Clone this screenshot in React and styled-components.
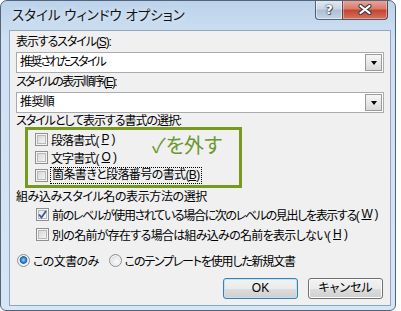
import React from "react";
import styled, { createGlobalStyle } from "styled-components";

const GlobalStyle = createGlobalStyle`
  body {
    margin: 0;
    background: #ffffff;
    font-family: "Liberation Sans", "Noto Sans CJK JP", sans-serif;
    font-feature-settings: "palt";
  }
`;

export default function App() {
  return (
    <>
      <GlobalStyle />
      <Window>
        <TitleBar>
          <Title>スタイル ウィンドウ オプション</Title>
          <Captions>
            <HelpButton>?</HelpButton>
            <CloseButton>
              <svg width="14" height="11" viewBox="0 0 14 11">
                <path d="M2.5 2 L11.5 9 M11.5 2 L2.5 9" stroke="#3b3f4a" strokeWidth="4.2" strokeLinecap="round" />
                <path d="M2.5 2 L11.5 9 M11.5 2 L2.5 9" stroke="#fff" strokeWidth="2.2" strokeLinecap="round" />
              </svg>
            </CloseButton>
          </Captions>
        </TitleBar>
        <Client>
          <Label $ls={-1.1}>
            表示するスタイル(<u>S</u>):
          </Label>
          <Combo $ls={-1.8}>
            <span>推奨されたスタイル</span>
            <DropButton />
          </Combo>
          <Label $ls={-1.7}>
            スタイルの表示順序(<u>E</u>):
          </Label>
          <Combo>
            <span>推奨順</span>
            <DropButton />
          </Combo>
          <Label $small $ls={-1.05}>
            スタイルとして表示する書式の選択:
          </Label>
          <NoteBox>
            <CheckRow $h={18} $ls={-0.9}>
              <Check />
              段落書式(<u>P</u>)
            </CheckRow>
            <Note>✓を外す</Note>
            <CheckRow $h={18} $ls={-0.9}>
              <Check />
              文字書式(<u>O</u>)
            </CheckRow>
            <CheckRow $h={18} $wide>
              <Check />
              <Focus>
                箇条書きと段落番号の書式(<u>B</u>)
              </Focus>
            </CheckRow>
          </NoteBox>
          <Label $small $gap $ls={-0.4}>
            組み込みスタイル名の表示方法の選択
          </Label>
          <CheckRow $h={20} $indent $ls={-1.35}>
            <Check $checked>
              <svg width="9" height="9" viewBox="0 0 9 9">
                <path d="M1 4.5 L3.5 7.5 L8 1" fill="none" stroke="#3d5a98" strokeWidth="1.8" />
              </svg>
            </Check>
            前のレベルが使用されている場合に次のレベルの見出しを表示する(<u>W</u>)
          </CheckRow>
          <CheckRow $h={20} $indent $ls={-0.7}>
            <Check />
            別の名前が存在する場合は組み込みの名前を表示しない(<u>H</u>)
          </CheckRow>
          <RadioRow>
            <RadioOption>
              <Radio $on />
              この文書のみ
            </RadioOption>
            <RadioOption $ls={-1.2}>
              <Radio />
              このテンプレートを使用した新規文書
            </RadioOption>
          </RadioRow>
          <ButtonRow>
            <Button $default>OK</Button>
            <Button>キャンセル</Button>
          </ButtonRow>
        </Client>
      </Window>
    </>
  );
}

const spacing = (p) => (p.$ls !== undefined ? `${p.$ls}px` : "inherit");

const Window = styled.div`
  width: 396px;
  height: 311px;
  box-sizing: border-box;
  border: 1px solid #56647a;
  border-radius: 7px 7px 6px 6px;
  background: linear-gradient(180deg, #bcd3eb 0%, #cfe0f2 40px, #d7e6f5 100%);
  display: flex;
  flex-direction: column;
  overflow: hidden;
`;

const TitleBar = styled.div`
  height: 29px;
  display: flex;
  justify-content: space-between;
  align-items: flex-start;
`;

const Title = styled.div`
  margin: 6px 0 0 11px;
  font-size: 13.5px;
  line-height: 18px;
  color: #111;
  text-shadow: 0 0 6px rgba(255, 255, 255, 0.9);
`;

const Captions = styled.div`
  display: flex;
  margin: -1px 7px 0 0;
`;

const CaptionBase = styled.div`
  height: 20px;
  box-sizing: border-box;
  border: 1px solid rgba(45, 55, 75, 0.75);
  border-top: none;
  display: flex;
  align-items: center;
  justify-content: center;
`;

const HelpButton = styled(CaptionBase)`
  width: 27px;
  border-right: none;
  border-radius: 0 0 0 4px;
  font-family: "DejaVu Sans", sans-serif;
  font-weight: bold;
  font-size: 13px;
  color: #fff;
  text-shadow: 0 0 1px #333, 0 0 2px #445, 1px 1px 0 #667;
  background: linear-gradient(180deg, #e3ebf4 0%, #c9d6e5 45%, #aebfd4 55%, #c4d4e6 100%);
  box-shadow: inset 0 0 0 1px rgba(255, 255, 255, 0.5);
`;

const CloseButton = styled(CaptionBase)`
  width: 46px;
  border-radius: 0 0 4px 0;
  background: linear-gradient(180deg, #e9a99c 0%, #d77d6c 45%, #c34632 55%, #d7725c 100%);
  box-shadow: inset 0 0 0 1px rgba(255, 220, 210, 0.45);
`;

const Client = styled.div`
  flex: 1;
  margin: 0 4px 4px 8px;
  border: 1px solid #8fa6c1;
  background: #f0f0f0;
  padding: 2px 6px 0 6px;
  display: flex;
  flex-direction: column;
  font-size: 12px;
  letter-spacing: -0.6px;
  color: #000;

  u {
    text-decoration: underline;
    text-underline-offset: 1px;
  }
`;

const Label = styled.div`
  line-height: ${(p) => (p.$small ? "14px" : "19px")};
  margin-top: ${(p) => (p.$small ? (p.$gap ? "2px" : "1px") : "0")};
  letter-spacing: ${spacing};
  white-space: nowrap;
`;

const Combo = styled.div`
  height: 21px;
  box-sizing: border-box;
  border: 1px solid #a9abb0;
  background: #fff;
  display: flex;
  align-items: center;
  justify-content: space-between;
  padding-left: 3px;
  line-height: 19px;
  letter-spacing: ${spacing};
`;

const DropButton = styled.div`
  width: 17px;
  height: 17px;
  margin-right: 1px;
  box-sizing: border-box;
  border: 1px solid #9b9b9b;
  background: linear-gradient(180deg, #f6f6f6 0%, #e7e7e7 50%, #d9d9d9 100%);
  display: flex;
  align-items: center;
  justify-content: center;

  &::after {
    content: "";
    border-left: 3.5px solid transparent;
    border-right: 3.5px solid transparent;
    border-top: 4px solid #000;
    margin-top: 1px;
  }
`;

const NoteBox = styled.div`
  margin: -1px 0 0 9px;
  width: 217px;
  box-sizing: border-box;
  border: 3px solid #789a1c;
  padding: 0 0 1px 7px;
  display: grid;
  grid-template-columns: 115px auto;
  grid-template-rows: 18px 18px 18px;
`;

const Note = styled.div`
  grid-column: 2;
  grid-row: 1 / 3;
  align-self: start;
  margin: 1px 0 0 2px;
  font-family: "Noto Sans CJK JP", sans-serif;
  font-size: 20px;
  letter-spacing: 0;
  line-height: 28px;
  color: #6c9830;
  white-space: nowrap;
`;

const CheckRow = styled.div`
  height: ${(p) => p.$h}px;
  display: flex;
  align-items: center;
  gap: 3px;
  white-space: nowrap;
  margin-left: ${(p) => (p.$indent ? "20px" : "0")};
  grid-column: ${(p) => (p.$wide ? "1 / 3" : "1")};
  letter-spacing: ${spacing};
`;

const Check = styled.span`
  width: 13px;
  height: 13px;
  flex: none;
  box-sizing: border-box;
  border: 1px solid #8e8f8f;
  background: linear-gradient(135deg, #cfd0d1 0%, #e8e8e8 55%, #fbfbfb 100%);
  box-shadow: inset 0 0 0 1px #f4f4f4, inset 0 0 0 2px #b6b8bb;
  display: flex;
  align-items: center;
  justify-content: center;

  ${(p) =>
    p.$checked &&
    `
    background: linear-gradient(135deg, #dfe4ea 0%, #f2f4f6 60%, #fcfcfc 100%);
  `}
`;

const Focus = styled.span`
  outline: 1px dotted #000;
  outline-offset: 0;
  padding: 0 1px;
  line-height: 15px;
`;

const RadioRow = styled.div`
  margin-top: 6px;
  height: 20px;
  display: flex;
  align-items: center;
  gap: 10px;
  padding-left: 1px;
  white-space: nowrap;
`;

const RadioOption = styled.div`
  display: flex;
  align-items: center;
  gap: 3px;
  letter-spacing: ${spacing};
`;

const Radio = styled.span`
  width: 13px;
  height: 13px;
  flex: none;
  box-sizing: border-box;
  border-radius: 50%;
  border: 1px solid #8e8f8f;
  background: ${(p) =>
    p.$on
      ? "radial-gradient(circle at 50% 45%, #9fd2f5 0, #3d8fd4 2px, #1b5fa6 3.5px, #e9edf1 4.2px, #f6f6f6 100%)"
      : "radial-gradient(circle at 60% 60%, #fafafa 0, #e6e7e8 50%, #cdcfd1 100%)"};
  box-shadow: inset 0 0 0 1px #f2f2f2;
`;

const ButtonRow = styled.div`
  margin-top: 8px;
  display: flex;
  justify-content: flex-end;
  gap: 10px;
  padding-right: 1px;
  letter-spacing: 0;
`;

const Button = styled.div`
  width: 75px;
  height: 21px;
  box-sizing: border-box;
  border: 1px solid ${(p) => (p.$default ? "#3c7fb1" : "#707070")};
  border-radius: 3px;
  background: linear-gradient(180deg, #f2f2f2 0%, #ebebeb 50%, #dddddd 50%, #cfcfcf 100%);
  box-shadow: inset 0 0 0 1px ${(p) => (p.$default ? "#bde3f8" : "#fcfcfc")};
  display: flex;
  align-items: center;
  justify-content: center;
  line-height: 19px;
`;
